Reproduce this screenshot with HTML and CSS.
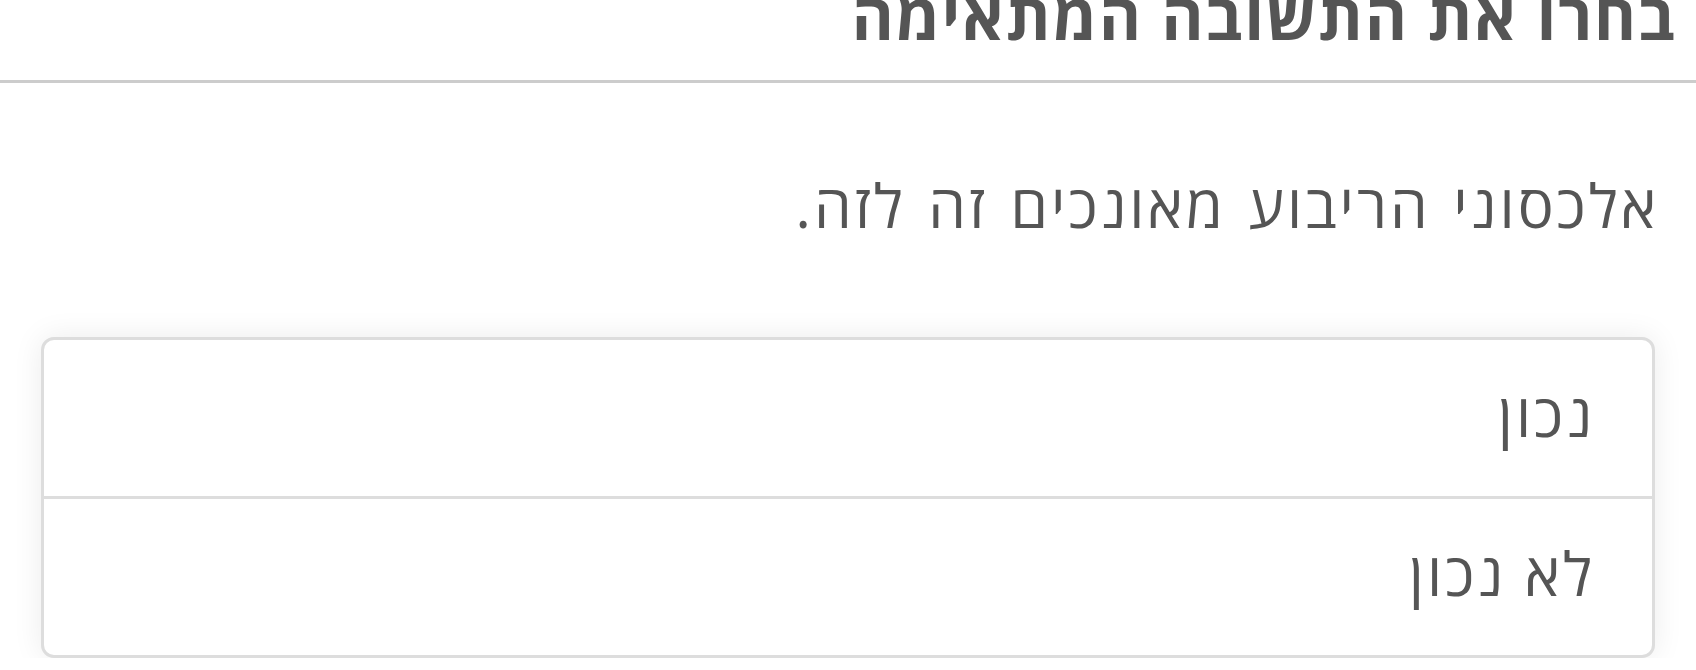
FILE: index.html
```html
<!DOCTYPE html>
<html lang="he" dir="rtl">
<head>
    <meta charset="UTF-8">
    <meta name="viewport" content="width=device-width, initial-scale=1.0">
    <title>שאלה</title>
    <link rel="stylesheet" href="styles.css">
</head>
<body>
	<div class="quizHeader">
		<h2 class="quizTitle">בחרו את התשובה המתאימה</h2>
	</div>

	<p class="question">אלכסוני הריבוע מאונכים זה לזה.</p>

	<ul class="answers">
		<li class="answer">נכון</li>
		<li class="answer">לא נכון</li>
	</ul>
</body>
</html>
```

FILE: styles.css
```css
body { margin: 0; background: #fff; color: #555; font-family: "Open Sans", "DejaVu Sans", sans-serif; direction: rtl; overflow: hidden; }

.quizHeader { padding: 0 19px 25px 0; border-bottom: 3px solid #ccc; }
.quizTitle { margin: -22px 0 0 0; font-size: 64px; line-height: 1.2; font-weight: 700; letter-spacing: 2px; }

.question { margin: 83px 37px 0 0; font-size: 60px; line-height: 1.3; letter-spacing: 3px; word-spacing: 4px; }

.answers { list-style-type: none; margin: 93px 41px 0 41px; padding: 0; border: 3px solid #ddd; border-radius: 13px; background: #fff; box-shadow: 0 0 30px rgba(0, 0, 0, 0.08); }
.answer { padding: 35px 57px 43px 0; font-size: 60px; line-height: 1.3; letter-spacing: 3px; }
.answer + .answer { border-top: 3px solid #ddd; }
```
